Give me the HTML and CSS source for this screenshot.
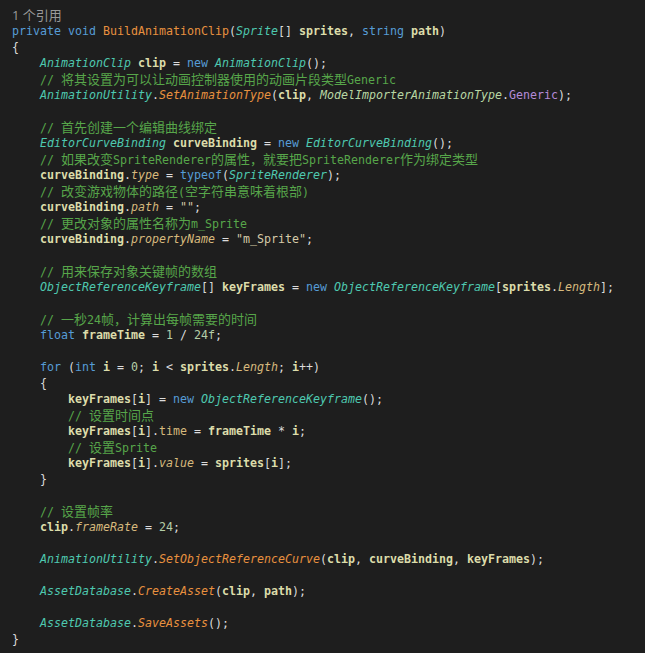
FILE: index.html
```html
<!DOCTYPE html>
<html lang="zh-CN">
<head>
<meta charset="utf-8">
<title>BuildAnimationClip</title>
<link rel="stylesheet" href="styles.css">
</head>
<body>
<div class="editor">
<div class="l lens"><span class="lens-num">1</span> <span class="lens-txt">个引用</span></div>
<div class="l"><span class="k">private</span> <span class="k">void</span> <span class="f">BuildAnimationClip</span>(<span class="t">Sprite</span>[] <span class="v">sprites</span>, <span class="k">string</span> <span class="v">path</span>)</div>
<div class="l">{</div>
<div class="l">    <span class="t">AnimationClip</span> <span class="v">clip</span> = <span class="k">new</span> <span class="t">AnimationClip</span>();</div>
<div class="l">    <span class="c">// <span class="z">将其设置为可以让动画控制器使用的动画片段类型</span>Generic</span></div>
<div class="l">    <span class="t">AnimationUtility</span>.<span class="m">SetAnimationType</span>(<span class="v">clip</span>, <span class="e">ModelImporterAnimationType</span>.<span class="em">Generic</span>);</div>
<div class="l"> </div>
<div class="l">    <span class="c">// <span class="z">首先创建一个编辑曲线绑定</span></span></div>
<div class="l">    <span class="t">EditorCurveBinding</span> <span class="v">curveBinding</span> = <span class="k">new</span> <span class="t">EditorCurveBinding</span>();</div>
<div class="l">    <span class="c">// <span class="z">如果改变</span>SpriteRenderer<span class="z">的属性，就要把</span>SpriteRenderer<span class="z">作为绑定类型</span></span></div>
<div class="l">    <span class="v">curveBinding</span>.<span class="p">type</span> = <span class="k">typeof</span>(<span class="t">SpriteRenderer</span>);</div>
<div class="l">    <span class="c">// <span class="z">改变游戏物体的路径</span>(<span class="z">空字符串意味着根部</span>)</span></div>
<div class="l">    <span class="v">curveBinding</span>.<span class="p">path</span> = <span class="s">""</span>;</div>
<div class="l">    <span class="c">// <span class="z">更改对象的属性名称为</span>m_Sprite</span></div>
<div class="l">    <span class="v">curveBinding</span>.<span class="p">propertyName</span> = <span class="s">"m_Sprite"</span>;</div>
<div class="l"> </div>
<div class="l">    <span class="c">// <span class="z">用来保存对象关键帧的数组</span></span></div>
<div class="l">    <span class="t">ObjectReferenceKeyframe</span>[] <span class="v">keyFrames</span> = <span class="k">new</span> <span class="t">ObjectReferenceKeyframe</span>[<span class="v">sprites</span>.<span class="p">Length</span>];</div>
<div class="l"> </div>
<div class="l">    <span class="c">// <span class="z">一秒</span>24<span class="z">帧，计算出每帧需要的时间</span></span></div>
<div class="l">    <span class="k">float</span> <span class="v">frameTime</span> = <span class="n">1</span> / <span class="n">24f</span>;</div>
<div class="l"> </div>
<div class="l">    <span class="k">for</span> (<span class="k">int</span> <span class="v">i</span> = <span class="n">0</span>; <span class="v">i</span> &lt; <span class="v">sprites</span>.<span class="p">Length</span>; <span class="v">i</span>++)</div>
<div class="l">    {</div>
<div class="l">        <span class="v">keyFrames</span>[<span class="v">i</span>] = <span class="k">new</span> <span class="t">ObjectReferenceKeyframe</span>();</div>
<div class="l">        <span class="c">// <span class="z">设置时间点</span></span></div>
<div class="l">        <span class="v">keyFrames</span>[<span class="v">i</span>].<span class="fd">time</span> = <span class="v">frameTime</span> * <span class="v">i</span>;</div>
<div class="l">        <span class="c">// <span class="z">设置</span>Sprite</span></div>
<div class="l">        <span class="v">keyFrames</span>[<span class="v">i</span>].<span class="p">value</span> = <span class="v">sprites</span>[<span class="v">i</span>];</div>
<div class="l">    }</div>
<div class="l"> </div>
<div class="l">    <span class="c">// <span class="z">设置帧率</span></span></div>
<div class="l">    <span class="v">clip</span>.<span class="p">frameRate</span> = <span class="n">24</span>;</div>
<div class="l"> </div>
<div class="l">    <span class="t">AnimationUtility</span>.<span class="m">SetObjectReferenceCurve</span>(<span class="v">clip</span>, <span class="v">curveBinding</span>, <span class="v">keyFrames</span>);</div>
<div class="l"> </div>
<div class="l">    <span class="t">AssetDatabase</span>.<span class="m">CreateAsset</span>(<span class="v">clip</span>, <span class="v">path</span>);</div>
<div class="l"> </div>
<div class="l">    <span class="t">AssetDatabase</span>.<span class="m">SaveAssets</span>();</div>
<div class="l">}</div>
</div>
</body>
</html>
```
FILE: styles.css
```css
html, body {
  margin: 0;
  padding: 0;
  background: #1e1e1e;
}

.editor {
  width: 645px;
  height: 653px;
  box-sizing: border-box;
  padding: 7px 0 0 12px;
  background: #1e1e1e;
  color: #dcdcdc;
  font-family: "DejaVu Sans Mono", "Liberation Mono", monospace;
  font-size: 11.63px;
  overflow: hidden;
}

.l {
  height: 16px;
  line-height: 16px;
  white-space: pre;
}

.lens {
  color: #999999;
  font-family: "Open Sans", "Noto Sans CJK SC", sans-serif;
  font-size: 13px;
}

.lens-txt {
  font-family: "Noto Sans CJK SC", sans-serif;
  font-size: 13px;
}

.z {
  font-family: "Noto Sans CJK SC", sans-serif;
  font-size: 13px;
  line-height: 16px;
}

.k { color: #569cd6; }
.t { color: #4ec9b0; font-style: italic; }
.e { color: #b8d7a3; font-style: italic; }
.em { color: #b48ad8; }
.f { color: #e8913f; }
.m { color: #e8913f; font-style: italic; }
.v { color: #dcdcaa; font-weight: bold; }
.p { color: #d7ba7d; font-style: italic; }
.fd { color: #d7ba7d; }
.c { color: #57a64a; }
.s { color: #d6cba8; }
.n { color: #b5cea8; }
```
